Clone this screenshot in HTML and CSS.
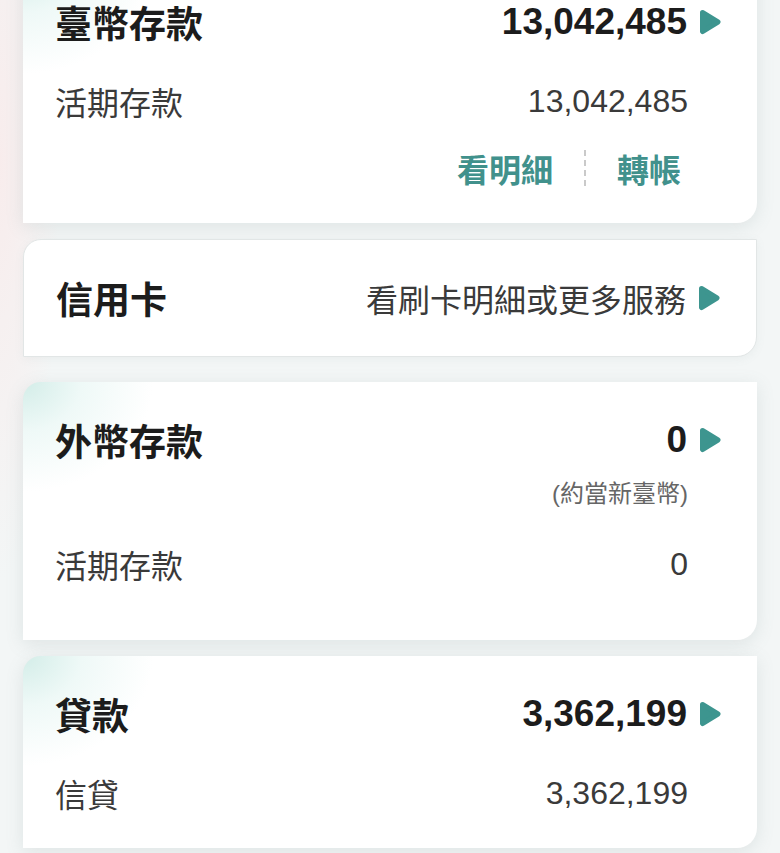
FILE: index.html
```html
<!DOCTYPE html>
<html lang="zh-Hant">
<head>
<meta charset="utf-8">
<title>帳戶總覽</title>
<link rel="stylesheet" href="styles.css">
</head>
<body>
<main class="list">
  <section class="card card--glow card--first">
    <div class="row row--head">
      <h2 class="title">臺幣存款</h2>
      <div class="amount"><span class="num-bold">13,042,485</span><svg class="arrow" viewBox="0 0 22 26" aria-hidden="true"><path d="M3.5 3.5 L19 13 L3.5 22.5 Z"/></svg></div>
    </div>
    <div class="row row--sub">
      <span class="label">活期存款</span>
      <span class="num">13,042,485</span>
    </div>
    <div class="links">
      <a class="link">看明細</a>
      <span class="sep"></span>
      <a class="link">轉帳</a>
    </div>
  </section>

  <section class="card card--plain">
    <div class="row row--head">
      <h2 class="title">信用卡</h2>
      <div class="amount"><span class="more">看刷卡明細或更多服務</span><svg class="arrow" viewBox="0 0 22 26" aria-hidden="true"><path d="M3.5 3.5 L19 13 L3.5 22.5 Z"/></svg></div>
    </div>
  </section>

  <section class="card card--glow card--tall">
    <div class="row row--head">
      <h2 class="title">外幣存款</h2>
      <div class="amount"><span class="num-bold">0</span><svg class="arrow" viewBox="0 0 22 26" aria-hidden="true"><path d="M3.5 3.5 L19 13 L3.5 22.5 Z"/></svg></div>
    </div>
    <div class="row row--note">
      <span class="note">(約當新臺幣)</span>
    </div>
    <div class="row row--sub row--sub-far">
      <span class="label">活期存款</span>
      <span class="num">0</span>
    </div>
  </section>

  <section class="card card--glow">
    <div class="row row--head">
      <h2 class="title">貸款</h2>
      <div class="amount"><span class="num-bold">3,362,199</span><svg class="arrow" viewBox="0 0 22 26" aria-hidden="true"><path d="M3.5 3.5 L19 13 L3.5 22.5 Z"/></svg></div>
    </div>
    <div class="row row--sub">
      <span class="label">信貸</span>
      <span class="num">3,362,199</span>
    </div>
  </section>
</main>
</body>
</html>
```

FILE: styles.css
```css
html, body {
  margin: 0;
  padding: 0;
}
body {
  width: 780px;
  height: 853px;
  overflow: hidden;
  font-family: "Liberation Sans", "Noto Sans CJK TC", sans-serif;
  background:
    radial-gradient(ellipse 60px 420px at 0 160px, rgba(250, 232, 232, 0.7), rgba(250, 232, 232, 0)),
    #f3f6f6;
  color: #1c1c1c;
}
.list {
  display: flex;
  flex-direction: column;
  gap: 16px;
  padding: 0 23px;
}
.card {
  background: #ffffff;
  border-radius: 18px 0 20px 0;
  padding: 38px 36px 35px 32px;
  box-shadow: 0 4px 18px rgba(110, 135, 135, 0.16);
}
.card--glow {
  background:
    radial-gradient(ellipse 130px 110px at 0 0, #d3ede8 0%, rgba(228, 245, 242, 0.6) 45%, rgba(255, 255, 255, 0) 100%),
    #ffffff;
}
.card--first {
  margin-top: -36px;
  border-radius: 0 0 20px 0;
}
.card--plain {
  border: 1px solid #e2e6e6;
  padding-top: 38px;
  padding-bottom: 38px;
  margin: 0 0 9px;
  box-shadow: 0 2px 10px rgba(110, 135, 135, 0.08);
}
.card--tall {
  padding-bottom: 56px;
}
.row {
  display: flex;
  align-items: center;
  justify-content: space-between;
}
.row--head {
  height: 40px;
}
.title {
  margin: 0;
  font-size: 37px;
  line-height: 40px;
  font-weight: 700;
  font-family: "Noto Sans CJK TC", sans-serif;
  color: #1c1c1c;
}
.amount {
  display: flex;
  align-items: center;
  gap: 12px;
}
.num-bold {
  font-size: 37px;
  line-height: 40px;
  font-weight: 700;
  color: #1c1c1c;
}
.more {
  font-size: 32px;
  line-height: 40px;
  color: #3a3a3a;
  font-family: "Noto Sans CJK TC", sans-serif;
}
.arrow {
  width: 22px;
  height: 26px;
  display: block;
}
.arrow path {
  fill: #3d958f;
  stroke: #3d958f;
  stroke-width: 5;
  stroke-linejoin: round;
}
.row--sub {
  height: 40px;
  margin-top: 39px;
  padding-right: 33px;
}
.row--sub-far {
  margin-top: 35px;
}
.label {
  font-size: 32px;
  line-height: 40px;
  color: #3a3a3a;
  font-family: "Noto Sans CJK TC", sans-serif;
}
.num {
  font-size: 32px;
  line-height: 40px;
  color: #3a3a3a;
}
.row--note {
  height: 30px;
  margin-top: 19px;
  justify-content: flex-end;
  padding-right: 33px;
}
.note {
  font-size: 24px;
  line-height: 30px;
  color: #666666;
}
.links {
  display: flex;
  justify-content: flex-end;
  align-items: center;
  height: 40px;
  margin-top: 27px;
  padding-right: 9px;
}
.link {
  font-size: 32px;
  line-height: 40px;
  font-weight: 700;
  color: #41918c;
  font-family: "Noto Sans CJK TC", sans-serif;
  padding: 0 31px;
}
.sep {
  width: 0;
  height: 36px;
  border-left: 2px dashed #cacaca;
}
```
